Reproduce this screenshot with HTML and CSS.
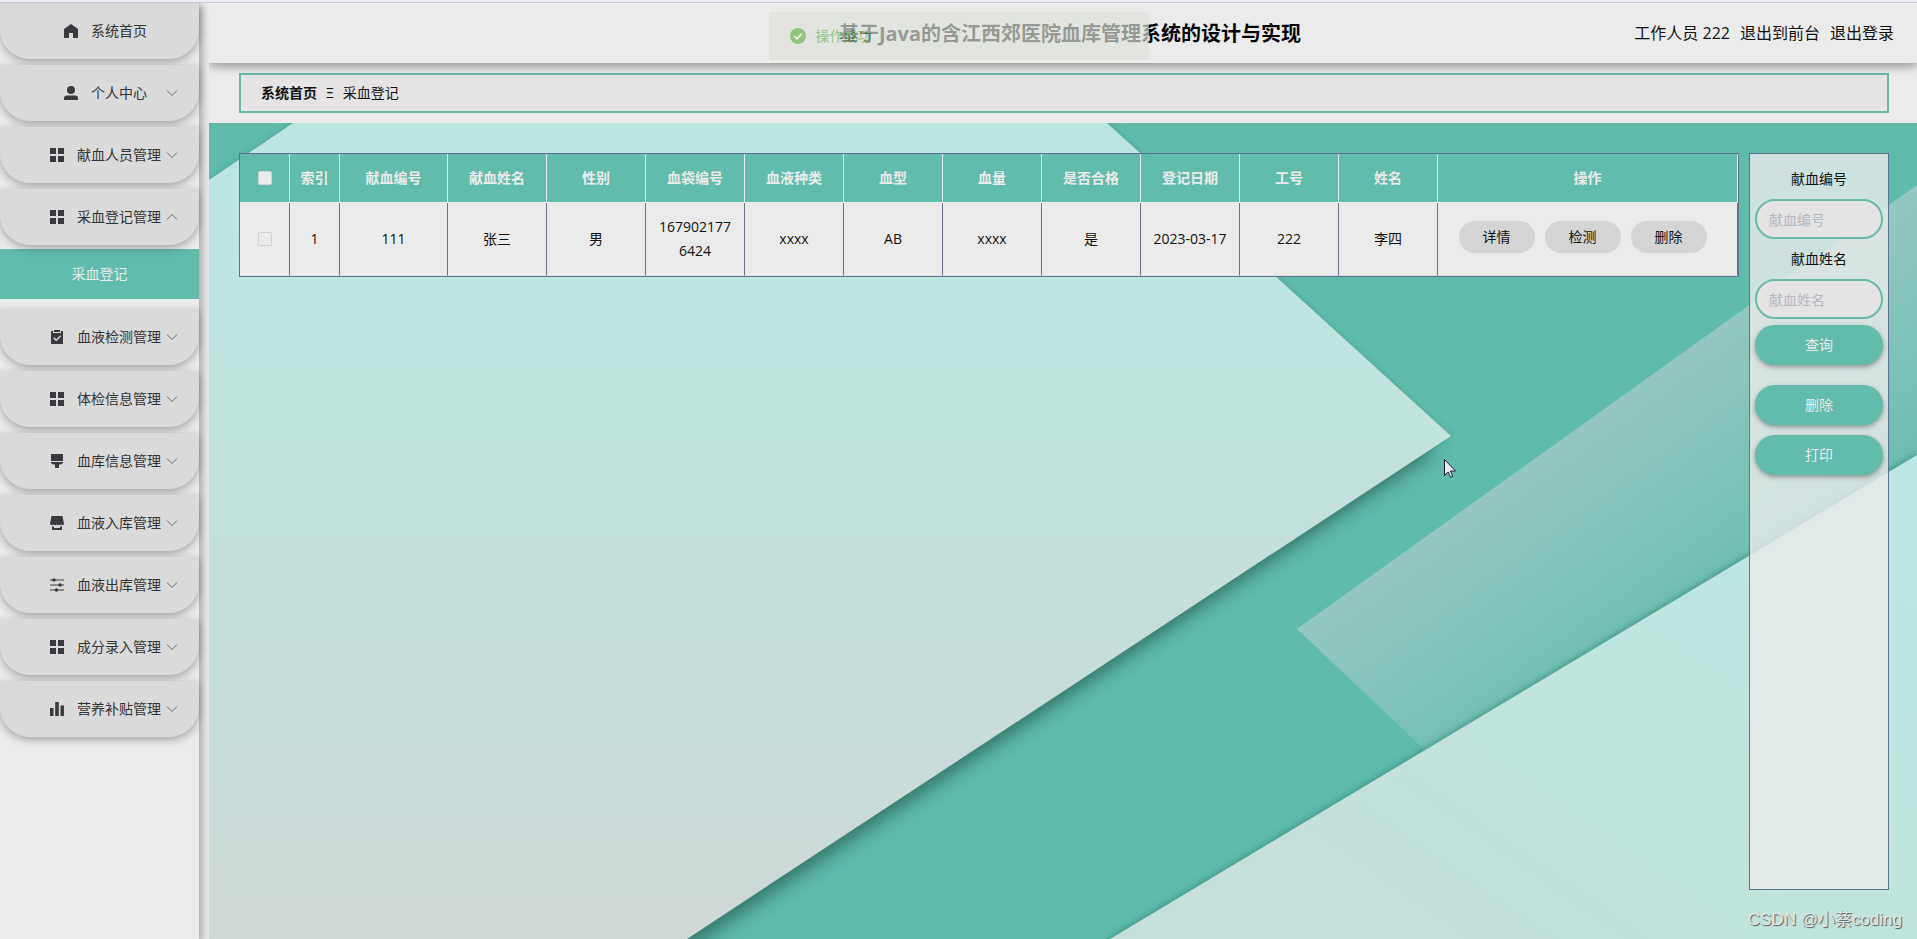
FILE: index.html
```html
<!DOCTYPE html>
<html lang="zh-CN">
<head>
<meta charset="utf-8">
<title>基于Java的含江西郊医院血库管理系统的设计与实现</title>
<link rel="stylesheet" href="styles.css">
</head>
<body>
<svg class="defs" aria-hidden="true">
  <symbol id="grid" viewBox="0 0 14 14"><path d="M0 0h6v6H0zM8 0h6v6H8zM0 8h6v6H0zM8 8h6v6H8z"/></symbol>
  <symbol id="down" viewBox="0 0 12 12"><path d="M1 3.500l5 5 5-5" fill="none" stroke="#66686c"/></symbol>
  <symbol id="up" viewBox="0 0 12 12"><path d="M1 8.500l5-5 5 5" fill="none" stroke="#66686c"/></symbol>
</svg>
<div class="shell">
  <nav class="sidebar">
    <ul class="menu">
      <li><a class="item" href="#"><svg class="icon" viewBox="0 0 14 14"><path d="M7 0l7 5v9H9V9H5v5H0V5z"/></svg><span>系统首页</span></a></li>
      <li><a class="item" href="#"><svg class="icon" viewBox="0 0 14 14"><circle cx="7" cy="4" r="4"/><path d="M0 14v-2q0-2.500 3-2.500h8q3 0 3 2.500v2z"/></svg><span>个人中心</span><svg class="arrow"><use href="#down"/></svg></a></li>
      <li><a class="item" href="#"><svg class="icon"><use href="#grid"/></svg><span>献血人员管理</span><svg class="arrow"><use href="#down"/></svg></a></li>
      <li class="open"><a class="item" href="#"><svg class="icon"><use href="#grid"/></svg><span>采血登记管理</span><svg class="arrow"><use href="#up"/></svg></a>
        <a class="subitem" href="#">采血登记</a></li>
      <li><a class="item" href="#"><svg class="icon" viewBox="0 0 14 14"><path fill-rule="evenodd" d="M1 1h2v2h8V1h2v13H1zM3.200 8.200l3 3 5-5-1-1-4 4-2-2z"/><path d="M4 0h6v2H4z"/></svg><span>血液检测管理</span><svg class="arrow"><use href="#down"/></svg></a></li>
      <li><a class="item" href="#"><svg class="icon"><use href="#grid"/></svg><span>体检信息管理</span><svg class="arrow"><use href="#down"/></svg></a></li>
      <li><a class="item" href="#"><svg class="icon" viewBox="0 0 14 14"><path d="M1 0h12v7H1zM1 8h12v1q-1 1.500-4 1.500V14q-2 1.500-4 0v-3.500Q2 10.500 1 9z"/></svg><span>血库信息管理</span><svg class="arrow"><use href="#down"/></svg></a></li>
      <li><a class="item" href="#"><svg class="icon" viewBox="0 0 14 14"><path d="M1.500 0h11L14 8q-1 2-2.500.500-1 1.500-2.500 0-1 1.500-2.500 0-1 1.500-2.500 0Q1 10 0 8zM2 10.500h2V12h6v-1.500h2V14H2z"/></svg><span>血液入库管理</span><svg class="arrow"><use href="#down"/></svg></a></li>
      <li><a class="item" href="#"><svg class="icon" viewBox="0 0 14 14"><path d="M0 1.500h14v1H0zM0 6.500h14v1H0zM0 11.500h14v1H0z"/><circle cx="4" cy="2" r="1.700"/><circle cx="10" cy="7" r="1.700"/><circle cx="6.500" cy="12" r="1.700"/></svg><span>血液出库管理</span><svg class="arrow"><use href="#down"/></svg></a></li>
      <li><a class="item" href="#"><svg class="icon"><use href="#grid"/></svg><span>成分录入管理</span><svg class="arrow"><use href="#down"/></svg></a></li>
      <li><a class="item" href="#"><svg class="icon" viewBox="0 0 14 14"><path d="M0 6h3.500v8H0zM5.200 0h3.600v14H5.200zM10.500 3.500H14V14h-3.500z"/></svg><span>营养补贴管理</span><svg class="arrow"><use href="#down"/></svg></a></li>
    </ul>
  </nav>
  <div class="page">
    <header class="header">
      <h1 class="title">基于Java的含江西郊医院血库管理系统的设计与实现</h1>
      <div class="user"><span>工作人员 222</span><a href="#">退出到前台</a><a href="#">退出登录</a></div>
    </header>
    <div class="crumb-zone">
      <div class="crumbs"><a href="#">系统首页</a><span>Ξ</span><span>采血登记</span></div>
    </div>
    <main class="main">
      <svg class="backdrop" viewBox="209 123 1708 816" preserveAspectRatio="none" aria-hidden="true">
        <defs>
          <linearGradient id="g1" x1="0" y1="0" x2="0" y2="1">
            <stop offset="0" stop-color="#bae6e0"/><stop offset=".27" stop-color="#bfe4df"/><stop offset=".36" stop-color="#c1e3db"/><stop offset=".5" stop-color="#c4e0da"/><stop offset=".75" stop-color="#c8dcd9"/><stop offset="1" stop-color="#cfd8d6"/>
          </linearGradient>
          <linearGradient id="g2" gradientUnits="userSpaceOnUse" x1="1560" y1="440" x2="1690" y2="620">
            <stop offset="0" stop-color="#93c8bf"/><stop offset="1" stop-color="#6cbdb0"/>
          </linearGradient>
          <linearGradient id="g3" gradientUnits="userSpaceOnUse" x1="1800" y1="530" x2="1500" y2="960">
            <stop offset="0" stop-color="#bbe6e1"/><stop offset=".5" stop-color="#bfe4dc"/><stop offset="1" stop-color="#c5dfda"/>
          </linearGradient>
          <filter id="soft" x="-10%" y="-10%" width="120%" height="120%"><feGaussianBlur stdDeviation="9"/></filter>
          <filter id="thin" x="-10%" y="-10%" width="120%" height="120%"><feGaussianBlur stdDeviation="3"/></filter>
        </defs>
        <path fill="#60bbab" d="M209 123h1708v816H209z"/>
        <path fill="url(#g2)" d="M1297 629L1917 185V460L1425 750z"/>
        <path fill="#2d6c5e" opacity=".85" filter="url(#soft)" d="M200 200L260 200 1090 200 1436 452 680 955H200z"/>
        <path fill="#3c8878" opacity=".5" filter="url(#thin)" d="M209 180L293 123H1107L1451 436 687 939H209z"/>
        <path fill="url(#g1)" d="M209 180L293 123H1107L1451 436 687 939H209z"/>
        <path fill="#35897a" opacity=".7" filter="url(#thin)" d="M1110 937L1917 453V960H1100z"/>
        <path fill="url(#g3)" d="M1110 939L1917 455V939z"/>
      </svg>
      <div class="table-box">
        <table class="records">
          <colgroup><col class="c-small"><col class="c-small"><col class="c-id"><col class="c-mid" span="10"><col></colgroup>
          <thead><tr>
            <th><input type="checkbox" aria-label="全选"></th><th>索引</th><th>献血编号</th><th>献血姓名</th><th>性别</th><th>血袋编号</th><th>血液种类</th><th>血型</th><th>血量</th><th>是否合格</th><th>登记日期</th><th>工号</th><th>姓名</th><th>操作</th>
          </tr></thead>
          <tbody><tr>
            <td><input type="checkbox" aria-label="选择"></td><td>1</td><td>111</td><td>张三</td><td>男</td><td>1679021776424</td><td>xxxx</td><td>AB</td><td>xxxx</td><td>是</td><td class="date">2023-03-17</td><td>222</td><td>李四</td>
            <td class="ops"><button type="button">详情</button><button type="button">检测</button><button type="button">删除</button></td>
          </tr></tbody>
        </table>
      </div>
      <form class="search">
        <label for="no">献血编号</label>
        <input id="no" type="text" placeholder="献血编号">
        <label for="name">献血姓名</label>
        <input id="name" type="text" placeholder="献血姓名">
        <button class="query" type="button">查询</button>
        <button type="button">删除</button>
        <button type="button">打印</button>
      </form>
      <div class="watermark">CSDN @小蔡coding</div>
      <svg class="cursor" viewBox="0 0 12 19" aria-hidden="true"><path d="M.5 .5v16l3.700-3.500 2.400 5.300 2.200-1-2.400-5.300h5.100z" fill="#ebebef" stroke="#1c1c30"/></svg>
    </main>
  </div>
</div>
<div class="toast" role="status"><svg viewBox="0 0 16 16" aria-hidden="true"><circle cx="8" cy="8" r="8" fill="#67b24a"/><path d="M4.500 8.200l2.600 2.600 4.600-5" fill="none" stroke="#fff" stroke-width="1.600"/></svg><span>操作成功</span></div>
</body>
</html>
```
FILE: styles.css
```css
* { box-sizing: border-box; }

body {
  margin: 0;
  min-height: 100vh;
  background: #ebebeb;
  color: #111;
  font: 14px/24px "Open Sans", "Noto Sans CJK SC", sans-serif;
}

a { color: inherit; text-decoration: none; }
button, input { font: inherit; }
.defs { position: absolute; width: 0; height: 0; }

.shell {
  display: flex;
  gap: 10px;
  min-height: 100vh;
  border-top: 3px double #cfcfd5;
  background: #ebebeb;
}

.shell {
  border-top: 0;
  padding-top: 3px;
  background: linear-gradient(#ebebf2 2px, #cbcbd2 2px, #cbcbd2 3px, #ebebeb 3px);
}

.sidebar {
  flex: none;
  width: 199px;
  box-shadow: 3px 3px 8px rgba(0, 0, 0, .3);
  clip-path: inset(0 -12px 0 0);
}

.menu { margin: 0; padding: 0; list-style: none; }
.menu li { margin-bottom: 6px; }
.menu .open { margin-bottom: 10px; }

.item {
  position: relative;
  display: flex;
  align-items: center;
  justify-content: center;
  gap: 13px;
  height: 56px;
  padding-left: 12px;
  border-radius: 0 0 30px 30px;
  background: #dadada;
  color: #333;
  box-shadow: 0 3px 8px rgba(0, 0, 0, .3);
}

.icon { width: 14px; height: 14px; fill: #383a3e; }
.arrow { position: absolute; right: 21px; width: 12px; height: 12px; }

.subitem {
  display: block;
  margin-top: 4px;
  background: #61bcac;
  color: #ebebeb;
  line-height: 50px;
  text-align: center;
}

.page { flex: 1; min-width: 0; display: flex; flex-direction: column; }

.header {
  position: relative;
  z-index: 1;
  display: grid;
  grid-template-columns: 1fr auto 1fr;
  align-items: center;
  height: 60px;
  padding: 0 23px 0 37px;
  background: #ebebeb;
  box-shadow: 0 3px 10px rgba(0, 0, 0, .4);
  clip-path: inset(0 0 -16px 0);
}

.title { grid-column: 2; margin: 0; padding-top: 2px; font-size: 20px; color: #000; }
.user { display: flex; justify-content: flex-end; gap: 10px; font-size: 16px; white-space: nowrap; }

.crumb-zone { padding: 10px 28px 10px 30px; }

.crumbs {
  display: flex;
  align-items: center;
  gap: 9px;
  height: 40px;
  padding: 0 20px;
  border: 2px solid #69b8a8;
  background: #e5e3e3;
}

.crumbs a { font-weight: 700; }

.main {
  position: relative;
  flex: 1;
  display: flex;
  align-items: flex-start;
  gap: 10px;
  padding: 30px 28px 49px 30px;
}

.backdrop { position: absolute; inset: 0; width: 100%; height: 100%; }

.table-box {
  position: relative;
  flex: 1;
  border: 1px solid #64708f;
  background: #ebebeb;
}

.records { width: 100%; table-layout: fixed; border-collapse: separate; border-spacing: 0; text-align: center; }
.c-small { width: 50px; }
.c-id { width: 108px; }
.c-mid { width: 99px; }

.records th {
  height: 49px;
  padding: 0 8px;
  border-right: 1px solid #e4eeec;
  border-bottom: 1px solid #e4eeec;
  background: #61bcac;
  color: #ebebeb;
}

.records td {
  height: 73px;
  padding: 0 10px;
  border-right: 1px solid #6f7090;
  border-bottom: 1px solid #dddde4;
  word-break: break-all;
}

.records .date { padding: 0 4px; }

.records input {
  appearance: none;
  display: block;
  width: 14px;
  height: 14px;
  margin: 0 auto;
  border: 1px solid #d0d0d8;
  border-radius: 2px;
  background: #ebebeb;
}

.records button {
  width: 76px;
  height: 32px;
  margin: 0 10px 4px 0;
  padding: 0;
  border: 0;
  border-radius: 16px;
  background: #d4d4d4;
  color: #111;
}

.search {
  position: relative;
  align-self: stretch;
  display: flex;
  flex-direction: column;
  width: 140px;
  padding: 5px;
  border: 1px solid #5f7391;
  background: rgba(235, 235, 235, .8);
}

.search label { line-height: 40px; text-align: center; }

.search input {
  width: 100%;
  height: 40px;
  padding: 0 12px;
  border: 2px solid #69b8a8;
  border-radius: 20px;
  background: #e5e3e3;
}

.search input::placeholder { color: #b4b7be; }

.search button {
  height: 40px;
  margin-bottom: 10px;
  border: 0;
  border-radius: 20px;
  background: #61bcac;
  color: #ebebeb;
  box-shadow: 0 2px 5px rgba(0, 0, 0, .35);
}

.search .query { margin: 6px 0 20px; }

.watermark {
  position: absolute;
  right: 15px;
  bottom: 7px;
  color: #e2e8e6;
  font-family: "Liberation Sans", "Noto Sans CJK SC", sans-serif;
  font-size: 17px;
  text-shadow: 1px 1px 1px #555;
}

.cursor { position: absolute; left: 1235px; top: 336px; width: 12px; height: 19px; }

.toast {
  position: fixed;
  z-index: 2;
  top: 12px;
  left: 50%;
  display: flex;
  align-items: center;
  gap: 10px;
  width: 380px;
  height: 48px;
  padding: 0 20px;
  border: 1px solid #d6dfcf;
  border-radius: 4px;
  background: #dee2d9;
  color: #67b24a;
  opacity: .68;
  transform: translateX(-50%);
}

.toast svg { width: 16px; height: 16px; }
```
